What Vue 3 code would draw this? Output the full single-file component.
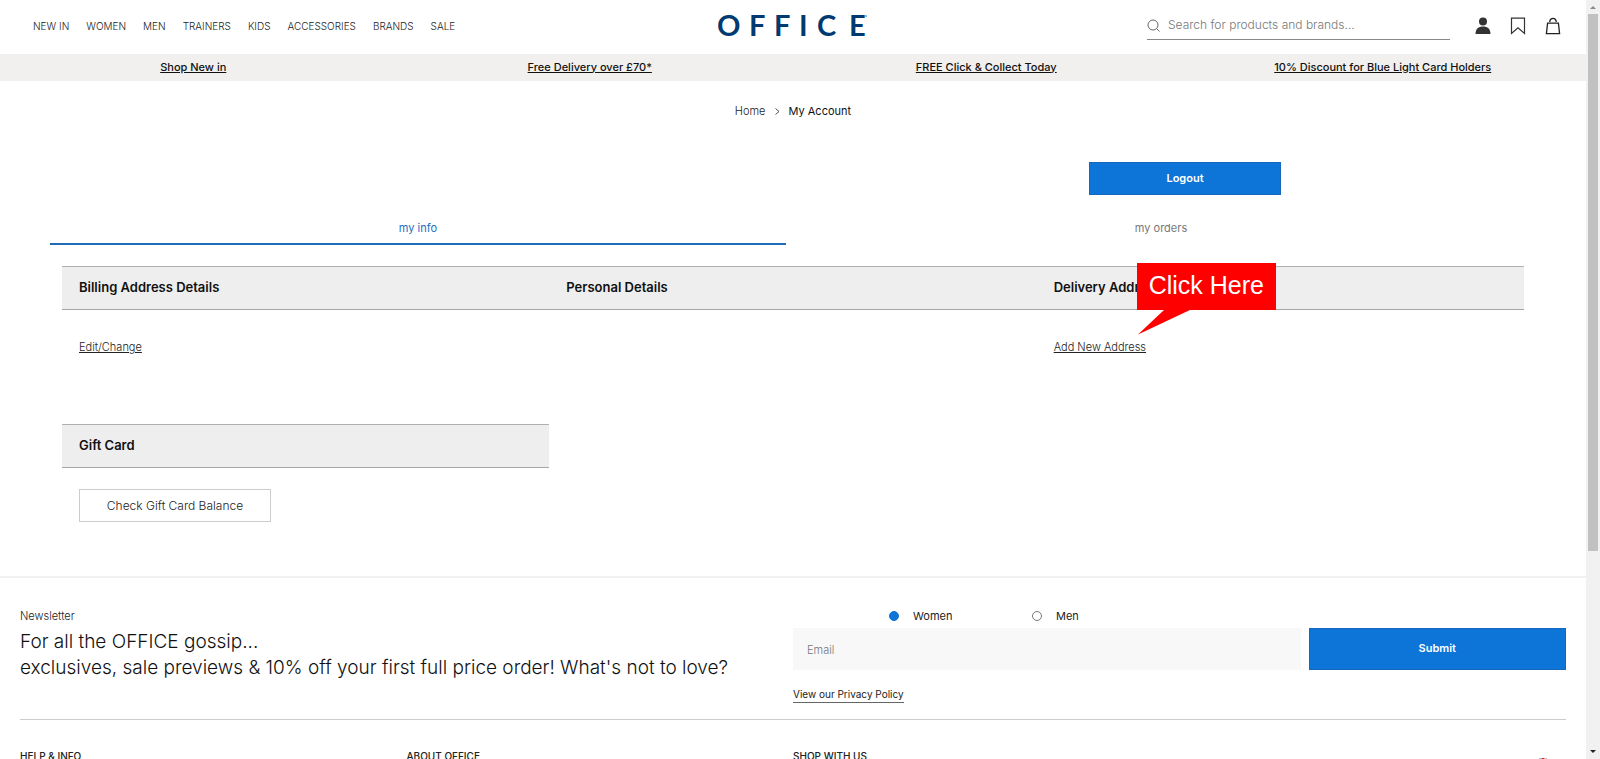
<script setup>
import { ref } from 'vue'

const navItems = ['NEW IN', 'WOMEN', 'MEN', 'TRAINERS', 'KIDS', 'ACCESSORIES', 'BRANDS', 'SALE']
const promos = ['Shop New in', 'Free Delivery over £70*', 'FREE Click & Collect Today', '10% Discount for Blue Light Card Holders']
const footerHeads = ['HELP & INFO', 'ABOUT OFFICE', 'SHOP WITH US']
const gender = ref('women')
const email = ref('')
const query = ref('')
</script>

<template>
  <div class="window">
    <div class="page">
      <header class="top">
        <nav class="nav">
          <a v-for="item in navItems" :key="item" href="#">{{ item }}</a>
        </nav>
        <a class="logo" href="#" aria-label="OFFICE home">
          <svg width="150" height="30" viewBox="0 0 150 30">
            <text x="-1 31 56 81 99 131" y="25" class="logo-text">OFFICE</text>
            <circle cx="148" cy="5" r="1" fill="#7f9bb8" />
          </svg>
        </a>
        <div class="tools">
          <label class="search">
            <svg width="13" height="13" viewBox="0 0 13 13" fill="none" stroke="#666">
              <circle cx="6" cy="6" r="5" />
              <path d="M9.5 9.5 L12.5 12.5" />
            </svg>
            <input v-model="query" type="text" placeholder="Search for products and brands..." aria-label="Search" />
          </label>
          <a class="icon" href="#" aria-label="Account">
            <svg width="16" height="18" viewBox="0 0 16 18" fill="#333">
              <circle cx="8" cy="4.5" r="4" />
              <path d="M0.5 17 C0.5 12 3.5 9.6 8 9.6 C12.5 9.6 15.5 12 15.5 17 Z" />
            </svg>
          </a>
          <a class="icon" href="#" aria-label="Saved items">
            <svg width="16" height="18" viewBox="0 0 16 18" fill="none" stroke="#333" stroke-width="1.2">
              <path d="M1.5 1.2 H14.5 V16.5 L8 10.8 L1.5 16.5 Z" />
            </svg>
          </a>
          <a class="icon" href="#" aria-label="Bag">
            <svg width="16" height="18" viewBox="0 0 16 18" fill="none" stroke="#222" stroke-width="1.3">
              <path d="M2.6 6.2 H13.4 L14.6 16.6 H1.4 Z" />
              <path d="M4.6 4.8 C5 2.6 6.2 1.4 8 1.4 C9.8 1.4 11 2.6 11.4 4.8" />
            </svg>
          </a>
        </div>
      </header>

      <div class="promos">
        <div v-for="p in promos" :key="p"><a href="#">{{ p }}</a></div>
      </div>

      <nav class="crumbs" aria-label="Breadcrumb">
        <a href="#">Home</a>
        <svg width="5" height="7" viewBox="0 0 5 7" fill="none" stroke="#555"><path d="M0.5 0.5 L4 3.5 L0.5 6.5" /></svg>
        <span class="current">My Account</span>
      </nav>

      <main class="account">
        <div class="logout-row"><button class="primary logout" type="button">Logout</button></div>

        <div class="tabs" role="tablist">
          <button type="button" role="tab" class="tab active" aria-selected="true">my info</button>
          <button type="button" role="tab" class="tab" aria-selected="false">my orders</button>
        </div>

        <div class="panels">
          <section class="panel">
            <h2>Billing Address Details</h2>
            <div class="body"><a href="#">Edit/Change</a></div>
          </section>
          <section class="panel">
            <h2>Personal Details</h2>
            <div class="body"></div>
          </section>
          <section class="panel">
            <h2>Delivery Address</h2>
            <div class="body"><a href="#">Add New Address</a></div>
            <div class="callout">
              <span>Click Here</span>
              <svg width="54" height="25" viewBox="0 0 54 25"><path d="M27 0 H53 L1 24.5 Z" fill="#f00" /></svg>
            </div>
          </section>
          <section class="panel">
            <h2>Gift Card</h2>
            <div class="gift"><button class="outline" type="button">Check Gift Card Balance</button></div>
          </section>
        </div>
      </main>

      <footer class="footer">
        <div class="newsletter">
          <div class="pitch">
            <p class="small">Newsletter</p>
            <p class="large">For all the OFFICE gossip...<br />exclusives, sale previews &amp; 10% off your first full price order! What's not to love?</p>
          </div>
          <form class="signup" @submit.prevent>
            <div class="genders">
              <label><input v-model="gender" type="radio" name="gender" value="women" />Women</label>
              <label><input v-model="gender" type="radio" name="gender" value="men" />Men</label>
            </div>
            <div class="fields">
              <input v-model="email" class="email" type="email" placeholder="Email" aria-label="Email" />
              <button class="primary" type="submit">Submit</button>
            </div>
            <a class="policy" href="#">View our Privacy Policy</a>
          </form>
        </div>
        <div class="columns">
          <h3 v-for="h in footerHeads" :key="h">{{ h }}</h3>
          <svg class="flag" width="20" height="20" viewBox="0 0 20 20">
            <circle cx="10" cy="10" r="10" fill="#2b4a8b" />
            <path d="M0 10 H20 M10 0 V20" stroke="#fff" stroke-width="5" />
            <path d="M0 10 H20 M10 0 V20" stroke="#d22" stroke-width="3" />
          </svg>
        </div>
      </footer>
    </div>

    <div class="scrollbar" aria-hidden="true">
      <svg width="14" height="14" viewBox="0 0 14 14"><path d="M4 9 L7 6 L10 9 Z" fill="#8a8a8a" /></svg>
      <div class="track"><div class="thumb"></div></div>
      <svg width="14" height="14" viewBox="0 0 14 14"><path d="M4 5 L7 8 L10 5 Z" fill="#222" /></svg>
    </div>
  </div>
</template>

<style>
body {
  background: #fff;
}
</style>

<style scoped>
.window {
  display: flex;
  height: 100vh;
  overflow: hidden;
  font-family: Inter, "Open Sans", sans-serif;
  font-size: 11px;
  line-height: 16px;
  color: #222;
}
.window * {
  box-sizing: border-box;
}
.page {
  flex: 1;
  min-width: 0;
  overflow: hidden;
}
a {
  color: inherit;
}
button,
input {
  font: inherit;
  color: inherit;
}
h2,
h3,
p {
  margin: 0;
}

.top {
  display: grid;
  grid-template-columns: 1fr auto 1fr;
  align-items: center;
  height: 54px;
  padding: 0 25px 2px;
}
.nav {
  display: flex;
  gap: 17px;
  padding-left: 8px;
}
.nav a {
  text-decoration: none;
  font-size: 10px;
  font-weight: 300;
  white-space: nowrap;
}
.logo svg {
  display: block;
}
.logo-text {
  font-family: Lato, sans-serif;
  font-size: 29px;
  font-weight: 700;
  fill: #003a70;
}
.tools {
  display: flex;
  align-items: center;
  justify-content: flex-end;
  gap: 19px;
}
.search {
  display: flex;
  align-items: center;
  gap: 8px;
  width: 303px;
  height: 28px;
  margin-right: 6px;
  border-bottom: 1px solid #888;
}
.search input {
  flex: 1;
  min-width: 0;
  border: 0;
  padding: 0 0 2px;
  outline: 0;
  background: none;
  font-size: 12px;
  font-weight: 300;
}
input::placeholder {
  color: #777;
  opacity: 1;
}
.icon svg {
  display: block;
}

.promos {
  display: grid;
  grid-template-columns: repeat(4, 1fr);
  align-items: center;
  height: 27px;
  padding-bottom: 2px;
  background: #f1f0ee;
  text-align: center;
  font-weight: 500;
  color: #111;
}
.promos div {
  padding-right: 10px;
}

.crumbs {
  display: flex;
  align-items: center;
  justify-content: center;
  gap: 9px;
  padding: 22px 0 43px;
}
.crumbs a {
  text-decoration: none;
  font-weight: 300;
}
.current {
  color: #111;
}

.account {
  padding: 0 50px 54px;
}
.logout-row {
  display: flex;
  justify-content: flex-end;
  padding-right: 255px;
}
.primary {
  border: 1px solid #1768bd;
  padding: 0 0 2px;
  background: #0d74d8;
  color: #fff;
  font-weight: 600;
  cursor: pointer;
}
.logout {
  width: 192px;
  height: 33px;
}
.tabs {
  display: grid;
  grid-template-columns: 1fr 1fr;
  gap: 7px;
  padding-right: 7px;
  margin-top: 14px;
}
.tab {
  height: 36px;
  padding: 4px 0 0;
  border: 0;
  border-bottom: 2px solid transparent;
  background: none;
  color: #777;
}
.tab.active {
  color: #1b6fc4;
  border-bottom-color: #1f6cb8;
}
.panels {
  display: grid;
  grid-template-columns: repeat(3, 1fr);
  padding: 21px 12px 0;
}
.panel {
  position: relative;
}
.panel h2 {
  height: 44px;
  padding: 0 17px;
  border-top: 1px solid #b0b0b0;
  border-bottom: 1px solid #a6a6a6;
  background: #eee;
  font-size: 13px;
  font-weight: 600;
  line-height: 41px;
  color: #111;
}
.body {
  height: 114px;
  padding: 29px 17px 0;
  font-weight: 300;
}
.gift {
  padding: 21px 17px 0;
}
.outline {
  display: block;
  width: 192px;
  height: 33px;
  border: 1px solid #ccc;
  background: #fff;
  font-size: 12px;
  font-weight: 300;
}
.callout {
  position: absolute;
  top: -3px;
  left: 100px;
  font-family: "Liberation Sans", Arial, sans-serif;
  font-size: 25px;
  color: #fff;
}
.callout span {
  display: block;
  padding: 0 12px 2px;
  background: #f00;
  line-height: 45px;
  white-space: nowrap;
}
.callout svg {
  display: block;
}

.footer {
  padding: 0 20px;
  border-top: 2px solid #f1f1f1;
}
.newsletter {
  display: grid;
  grid-template-columns: 1fr 1fr;
  height: 142px;
  padding-top: 30px;
  border-bottom: 1px solid #ccc;
}
.small {
  font-weight: 300;
}
.large {
  margin-top: 5px;
  font-size: 19px;
  font-weight: 300;
  line-height: 26px;
  color: #111;
  white-space: nowrap;
}
.genders {
  display: flex;
  padding-left: 96px;
  height: 20px;
}
.genders label {
  display: flex;
  align-items: center;
  gap: 14px;
  height: 16px;
  min-width: 143px;
}
.genders input {
  appearance: none;
  width: 10px;
  height: 10px;
  margin: 0;
  border: 1px solid #777;
  border-radius: 50%;
}
.genders input:checked {
  border-color: #0d74d8;
  background: #0d74d8;
}
.fields {
  display: grid;
  grid-template-columns: 1fr 33.3%;
  gap: 8px;
  height: 42px;
}
.email {
  border: 0;
  padding: 2px 14px 0;
  background: #f8f8f8;
  font-weight: 300;
}
.policy {
  display: inline-block;
  margin-top: 16px;
  border-bottom: 1px solid #666;
  font-size: 10px;
  text-decoration: none;
}
.columns {
  display: grid;
  grid-template-columns: repeat(4, 1fr);
  padding-top: 28px;
}
.columns h3 {
  font-size: 10px;
  font-weight: 500;
}
.flag {
  justify-self: end;
  margin: 10px 13px 0 0;
}

.scrollbar {
  display: flex;
  flex-direction: column;
  width: 14px;
  background: #f1f1f1;
}
.track {
  flex: 1;
  padding: 0 2px;
}
.thumb {
  height: 73.5%;
  background: #c1c1c1;
}
</style>
